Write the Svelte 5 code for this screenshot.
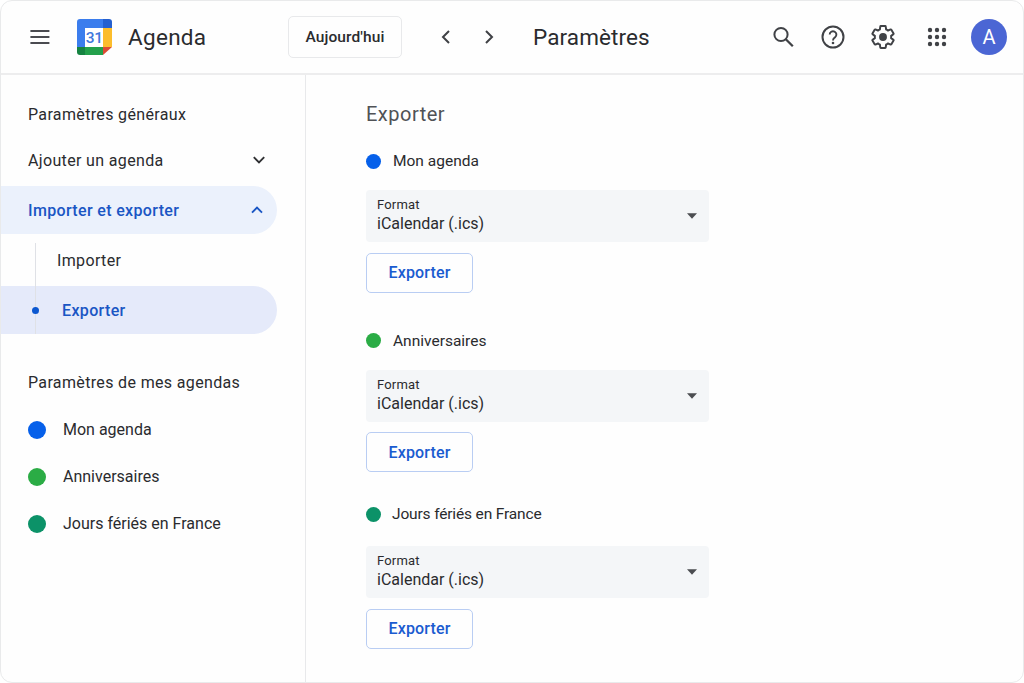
<script lang="ts">
	type Calendar = {
		name: string;
		color: string;
		format: string;
	};

	const calendars: Calendar[] = [
		{ name: 'Mon agenda', color: '#0660ea', format: 'iCalendar (.ics)' },
		{ name: 'Anniversaires', color: '#2bac45', format: 'iCalendar (.ics)' },
		{ name: 'Jours fériés en France', color: '#0c9268', format: 'iCalendar (.ics)' }
	];

	const appDots = [4, 11, 18];

	let importOpen = $state(true);
	let section = $state('export');
</script>

<div class="window">
	<header>
		<button class="icon menu" aria-label="Menu">
			<svg width="20" height="16" viewBox="0 0 20 16">
				<path d="M0.4 2h19M0.4 8h19M0.4 14h19" stroke="#4a4b50" stroke-width="1.9" />
			</svg>
		</button>
		<svg class="logo" width="35" height="36" viewBox="0 0 35 36">
			<path d="M3 0h24v9H8v19H0V3a3 3 0 0 1 3-3z" fill="#3b7ded" />
			<path d="M26 0h6a3 3 0 0 1 3 3v6h-9z" fill="#2560cf" />
			<path d="M26 9h9v19h-9z" fill="#fcbd2c" />
			<path d="M8 28h18v8H8z" fill="#23a04b" />
			<path d="M0 28h8v8H3a3 3 0 0 1-3-3z" fill="#158341" />
			<path d="M26 28h9l-9 8z" fill="#dd4b35" />
			<path d="M8 9h18v19H8z" fill="#fff" />
			<text x="17.2" y="23.8" text-anchor="middle">31</text>
		</svg>
		<span class="product">Agenda</span>
		<button class="today">Aujourd'hui</button>
		<button class="icon prev" aria-label="Précédent">
			<svg width="10" height="16" viewBox="0 0 10 16">
				<path d="M8 2L2 8l6 6" fill="none" stroke="#3f4145" stroke-width="2" />
			</svg>
		</button>
		<button class="icon next" aria-label="Suivant">
			<svg width="10" height="16" viewBox="0 0 10 16">
				<path d="M2 2l6 6-6 6" fill="none" stroke="#3f4145" stroke-width="2" />
			</svg>
		</button>
		<h1>Paramètres</h1>
		<div class="tools">
			<button class="icon" aria-label="Rechercher">
				<svg width="24" height="24" viewBox="0 0 24 24" fill="none" stroke="#404246" stroke-width="2">
					<circle cx="10" cy="9.5" r="6.6" />
					<path d="M14.8 14.3l7 7" stroke-width="2.3" />
				</svg>
			</button>
			<button class="icon" aria-label="Aide">
				<svg width="24" height="24" viewBox="0 0 24 24" fill="none" stroke="#404246">
					<circle cx="12" cy="12" r="10.5" stroke-width="2" />
					<path d="M8.7 9.6a3.35 3.35 0 1 1 5.4 2.6c-1.2 1-2.1 1.5-2.1 3.2" stroke-width="1.9" />
					<circle cx="12" cy="18" r="1.3" fill="#404246" stroke="none" />
				</svg>
			</button>
			<button class="icon" aria-label="Paramètres">
				<svg width="24" height="24" viewBox="1 1 22 22">
					<path
						d="M19.43 12.98c.04-.32.07-.64.07-.98s-.03-.66-.07-.98l2.11-1.65c.19-.15.24-.42.12-.64l-2-3.46c-.09-.16-.26-.25-.44-.25-.06 0-.12.01-.17.03l-2.49 1c-.52-.4-1.08-.73-1.69-.98l-.38-2.65C14.46 2.18 14.25 2 14 2h-4c-.25 0-.46.18-.49.42l-.38 2.65c-.61.25-1.17.59-1.69.98l-2.49-1c-.06-.02-.12-.03-.18-.03-.17 0-.34.09-.43.25l-2 3.46c-.13.22-.07.49.12.64l2.11 1.65c-.04.32-.07.65-.07.98s.03.66.07.98l-2.11 1.65c-.19.15-.24.42-.12.64l2 3.46c.09.16.26.25.44.25.06 0 .12-.01.17-.03l2.49-1c.52.4 1.08.73 1.69.98l.38 2.65c.03.24.24.42.49.42h4c.25 0 .46-.18.49-.42l.38-2.65c.61-.25 1.17-.59 1.69-.98l2.49 1c.06.02.12.03.18.03.17 0 .34-.09.43-.25l2-3.46c.12-.22.07-.49-.12-.64l-2.11-1.65z"
						fill="none"
						stroke="#404246"
						stroke-width="1.8"
					/>
					<circle cx="12" cy="12" r="3.6" fill="#404246" />
				</svg>
			</button>
			<button class="icon" aria-label="Applications">
				<svg width="22" height="22" viewBox="0 0 22 22" fill="#404246">
					{#each appDots as cy}
						{#each appDots as cx}
							<circle {cx} {cy} r="2.2" />
						{/each}
					{/each}
				</svg>
			</button>
			<span class="avatar">A</span>
		</div>
	</header>

	<div class="body">
		<nav>
			<button class="item">Paramètres généraux</button>
			<button class="item">
				Ajouter un agenda
				<svg class="down" width="14" height="10" viewBox="0 0 14 10">
					<path d="M1.8 2.2L7 7.4l5.2-5.2" fill="none" stroke="#303134" stroke-width="1.9" />
				</svg>
			</button>
			<button class="item open" onclick={() => (importOpen = !importOpen)}>
				Importer et exporter
				<svg width="14" height="10" viewBox="0 0 14 10">
					<path d="M2 7.6l5-5 5 5" fill="none" stroke="#1a56c4" stroke-width="1.9" />
				</svg>
			</button>
			{#if importOpen}
				<div class="sub">
					<button class:active={section === 'import'} onclick={() => (section = 'import')}>
						Importer
					</button>
					<button class:active={section === 'export'} onclick={() => (section = 'export')}>
						Exporter
					</button>
				</div>
			{/if}

			<h2>Paramètres de mes agendas</h2>
			<ul>
				{#each calendars as calendar}
					<li><span class="dot" style:background={calendar.color}></span>{calendar.name}</li>
				{/each}
			</ul>
		</nav>

		<main>
			<h2>Exporter</h2>
			{#each calendars as calendar}
				<section>
					<h3><span class="dot" style:background={calendar.color}></span>{calendar.name}</h3>
					<button class="select">
						<span class="value">
							<small>Format</small>
							<span>{calendar.format}</span>
						</span>
						<svg width="10" height="6" viewBox="0 0 10 6">
							<path d="M0 0.3h10L5 5.8z" fill="#4b4d51" />
						</svg>
					</button>
					<button class="export">Exporter</button>
				</section>
			{/each}
		</main>
	</div>
</div>

<style>
	:global(body) {
		background: #fff;
	}

	.window {
		box-sizing: border-box;
		width: 1024px;
		height: 683px;
		display: flex;
		flex-direction: column;
		overflow: hidden;
		border: 1px solid #e9eaeb;
		border-radius: 12px;
		background: #fefefe;
		color: #2a2b2e;
		font-family: Roboto, 'Liberation Sans', sans-serif;
		font-size: 16px;
		letter-spacing: 0.35px;
	}

	button {
		margin: 0;
		padding: 0;
		border: none;
		background: none;
		color: inherit;
		font: inherit;
		letter-spacing: inherit;
		cursor: pointer;
	}

	svg {
		display: block;
		flex: none;
	}

	h1,
	h2,
	h3 {
		margin: 0;
		font-weight: 400;
	}

	header {
		box-sizing: border-box;
		flex: none;
		height: 74px;
		display: flex;
		align-items: center;
		padding: 0 16px 0 29px;
		border-bottom: 2px solid #ededee;
	}

	.logo {
		margin-left: 27px;
	}

	.logo text {
		fill: #3f78dc;
		font-size: 15.5px;
		font-weight: 500;
		letter-spacing: -0.3px;
	}

	.product {
		width: 143px;
		margin-left: 16px;
		font-size: 22.5px;
		letter-spacing: 0.3px;
	}

	.today {
		box-sizing: border-box;
		width: 114px;
		height: 42px;
		margin-left: 17px;
		border: 1px solid #e8e9eb;
		border-radius: 5px;
		font-weight: 500;
		font-size: 15.5px;
		letter-spacing: 0.1px;
	}

	.prev {
		margin-left: 39px;
	}

	.next {
		margin-left: 33px;
	}

	h1 {
		margin-left: 39px;
		font-size: 22.5px;
		letter-spacing: 0.1px;
	}

	.tools {
		display: flex;
		align-items: center;
		margin-left: auto;
	}

	.tools .icon {
		width: 26px;
		margin-right: 24px;
		display: flex;
		justify-content: center;
	}

	.tools .icon:nth-child(4) {
		margin-left: 4px;
		margin-right: 21px;
	}

	.avatar {
		width: 36px;
		height: 36px;
		border-radius: 50%;
		background: #4b66d4;
		color: #fff;
		font-size: 20px;
		line-height: 37px;
		letter-spacing: 0;
		text-align: center;
	}

	.body {
		flex: 1;
		display: flex;
		min-height: 0;
	}

	nav {
		box-sizing: border-box;
		flex: none;
		width: 305px;
		padding-top: 16px;
		border-right: 1px solid #e8e9eb;
	}

	.item {
		width: 276px;
		height: 46px;
		display: flex;
		align-items: center;
		justify-content: space-between;
		padding: 0 13px 0 27px;
	}

	.item .down {
		margin-right: -2px;
	}

	.item.open {
		height: 48px;
		margin-top: 3px;
		border-radius: 0 24px 24px 0;
		background: #ebf1fc;
		color: #1a56c4;
		font-weight: 500;
		letter-spacing: 0.35px;
	}

	.sub {
		position: relative;
		margin-bottom: 26px;
	}

	.sub::before {
		content: '';
		position: absolute;
		left: 34px;
		top: 9px;
		bottom: 0;
		width: 1px;
		background: #dfe1e6;
	}

	.sub button {
		width: 276px;
		height: 52px;
		display: flex;
		align-items: center;
		padding-left: 56px;
	}

	.sub button.active {
		height: 48px;
		gap: 23px;
		padding-left: 31px;
		border-radius: 0 24px 24px 0;
		background: #e5eafa;
		color: #1a56c4;
		font-weight: 500;
	}

	.sub button.active::before {
		content: '';
		position: relative;
		width: 7px;
		height: 7px;
		border-radius: 50%;
		background: #0b57d0;
	}

	nav h2 {
		padding-left: 27px;
		font-size: 16px;
		line-height: 46px;
	}

	ul {
		margin: 0;
		padding: 0;
		list-style: none;
		letter-spacing: 0;
	}

	li {
		height: 47px;
		display: flex;
		align-items: center;
		gap: 17px;
		padding-left: 27px;
	}

	.dot {
		width: 18px;
		height: 18px;
		border-radius: 50%;
	}

	main {
		flex: 1;
		padding: 26px 0 0 60px;
	}

	main h2 {
		color: #505256;
		font-size: 20px;
		line-height: 26px;
		letter-spacing: 0.5px;
	}

	section {
		padding-top: 23px;
	}

	section + section {
		padding-top: 37px;
	}

	section:last-child {
		padding-top: 31px;
	}

	h3 {
		display: flex;
		align-items: center;
		gap: 12px;
		font-size: 15.5px;
		line-height: 22px;
		letter-spacing: 0;
	}

	section:last-child h3 {
		gap: 11px;
		letter-spacing: -0.15px;
	}

	h3 .dot {
		width: 15px;
		height: 15px;
	}

	.select {
		width: 343px;
		height: 52px;
		display: flex;
		align-items: center;
		justify-content: space-between;
		margin-top: 18px;
		padding: 0 12px 0 11px;
		border-radius: 4px;
		background: #f4f6f8;
		text-align: left;
		letter-spacing: 0;
	}

	section:last-child .select {
		margin-top: 21px;
	}

	.value {
		display: flex;
		flex-direction: column;
		padding-bottom: 2px;
		line-height: 20px;
	}

	.value small {
		font-size: 13px;
		line-height: 18px;
		letter-spacing: 0.2px;
	}

	.export {
		box-sizing: border-box;
		width: 107px;
		height: 40px;
		margin-top: 10.5px;
		border: 1px solid #b9cdf3;
		border-radius: 5px;
		color: #1a5bd0;
		font-weight: 500;
		letter-spacing: 0.15px;
	}
</style>
